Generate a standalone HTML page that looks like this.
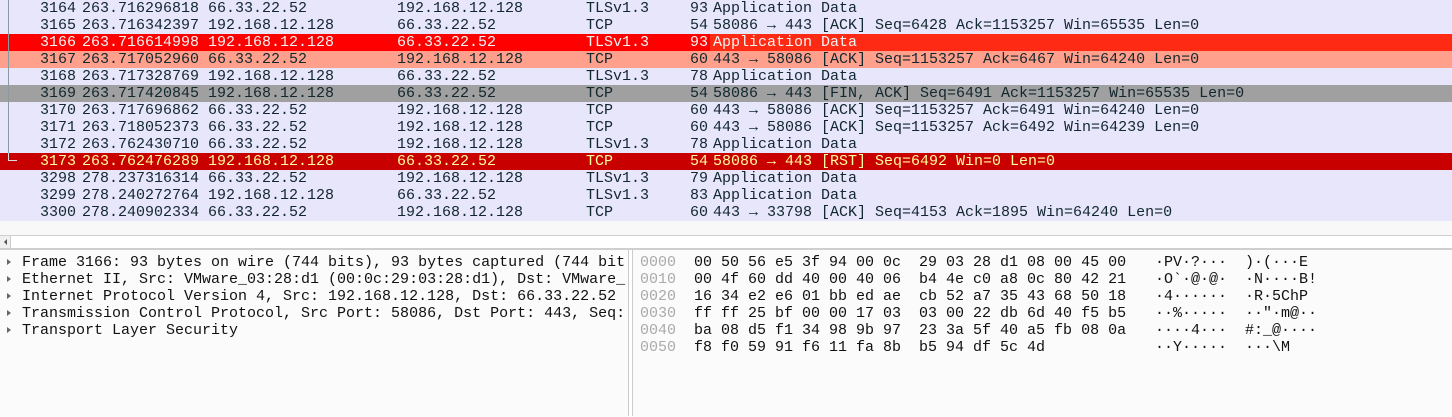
<!DOCTYPE html>
<html><head><meta charset="utf-8"><style>
body{margin:0;width:1452px;height:416px;background:#fff;overflow:hidden;font-family:"Liberation Mono",monospace;font-size:15px;position:relative}
.r{position:absolute;left:0;width:1452px;height:17px;line-height:17px;background:#e7e6fa;color:#12272e;white-space:pre}
.r span{position:absolute;top:0}
.n{left:0;width:76px;text-align:right}.t{left:82px}.s{left:208px}.d{left:397px}.p{left:586px}.l{left:660px;width:48px;text-align:right}.i{left:713px}
.tl{position:absolute;left:8px;top:0;width:1px;height:161px;background:#8a9aa0}
.pane{position:absolute;top:249px;height:167px;background:#fbfbfb}
.tr{position:absolute;left:22px;white-space:pre;color:#111;line-height:17px}
.ar{position:absolute;left:7px;width:0;height:0;border-left:4px solid #666;border-top:3.5px solid transparent;border-bottom:3.5px solid transparent}
.hx{position:absolute;white-space:pre;line-height:17px;color:#111}
</style></head><body>
<div class="r" style="top:0"><span class="n">3164</span><span class="t">263.716296818</span><span class="s">66.33.22.52</span><span class="d">192.168.12.128</span><span class="p">TLSv1.3</span><span class="l">93</span><span class="i">Application Data</span></div>
<div class="r" style="top:17px"><span class="n">3165</span><span class="t">263.716342397</span><span class="s">192.168.12.128</span><span class="d">66.33.22.52</span><span class="p">TCP</span><span class="l">54</span><span class="i">58086 → 443 [ACK] Seq=6428 Ack=1153257 Win=65535 Len=0</span></div>
<div class="r" style="top:34px;background:#ff0000;color:#f4f4f4"><span class="i" style="left:710px;width:742px;height:17px;background:#ff2a14"></span><span class="n">3166</span><span class="t">263.716614998</span><span class="s">192.168.12.128</span><span class="d">66.33.22.52</span><span class="p">TLSv1.3</span><span class="l">93</span><span class="i">Application Data</span></div>
<div class="r" style="top:51px;background:#ffa08c"><span class="n">3167</span><span class="t">263.717052960</span><span class="s">66.33.22.52</span><span class="d">192.168.12.128</span><span class="p">TCP</span><span class="l">60</span><span class="i">443 → 58086 [ACK] Seq=1153257 Ack=6467 Win=64240 Len=0</span></div>
<div class="r" style="top:68px"><span class="n">3168</span><span class="t">263.717328769</span><span class="s">192.168.12.128</span><span class="d">66.33.22.52</span><span class="p">TLSv1.3</span><span class="l">78</span><span class="i">Application Data</span></div>
<div class="r" style="top:85px;background:#a0a0a0"><span class="n">3169</span><span class="t">263.717420845</span><span class="s">192.168.12.128</span><span class="d">66.33.22.52</span><span class="p">TCP</span><span class="l">54</span><span class="i">58086 → 443 [FIN, ACK] Seq=6491 Ack=1153257 Win=65535 Len=0</span></div>
<div class="r" style="top:102px"><span class="n">3170</span><span class="t">263.717696862</span><span class="s">66.33.22.52</span><span class="d">192.168.12.128</span><span class="p">TCP</span><span class="l">60</span><span class="i">443 → 58086 [ACK] Seq=1153257 Ack=6491 Win=64240 Len=0</span></div>
<div class="r" style="top:119px"><span class="n">3171</span><span class="t">263.718052373</span><span class="s">66.33.22.52</span><span class="d">192.168.12.128</span><span class="p">TCP</span><span class="l">60</span><span class="i">443 → 58086 [ACK] Seq=1153257 Ack=6492 Win=64239 Len=0</span></div>
<div class="r" style="top:136px"><span class="n">3172</span><span class="t">263.762430710</span><span class="s">66.33.22.52</span><span class="d">192.168.12.128</span><span class="p">TLSv1.3</span><span class="l">78</span><span class="i">Application Data</span></div>
<div class="r" style="top:153px;background:#c80000;color:#fffc9c"><span class="n">3173</span><span class="t">263.762476289</span><span class="s">192.168.12.128</span><span class="d">66.33.22.52</span><span class="p">TCP</span><span class="l">54</span><span class="i">58086 → 443 [RST] Seq=6492 Win=0 Len=0</span></div>
<div class="r" style="top:170px"><span class="n">3298</span><span class="t">278.237316314</span><span class="s">66.33.22.52</span><span class="d">192.168.12.128</span><span class="p">TLSv1.3</span><span class="l">79</span><span class="i">Application Data</span></div>
<div class="r" style="top:187px"><span class="n">3299</span><span class="t">278.240272764</span><span class="s">192.168.12.128</span><span class="d">66.33.22.52</span><span class="p">TLSv1.3</span><span class="l">83</span><span class="i">Application Data</span></div>
<div class="r" style="top:204px"><span class="n">3300</span><span class="t">278.240902334</span><span class="s">66.33.22.52</span><span class="d">192.168.12.128</span><span class="p">TCP</span><span class="l">60</span><span class="i">443 → 33798 [ACK] Seq=4153 Ack=1895 Win=64240 Len=0</span></div>
<div class="tl"></div>
<div style="position:absolute;left:8px;top:160px;width:9px;height:1px;background:#ddd"></div>
<div style="position:absolute;left:8px;top:153px;width:1px;height:8px;background:#ddd"></div>
<div style="position:absolute;left:0;top:221px;width:1452px;height:15px;background:#f8f8f8"></div>
<div style="position:absolute;left:0;top:235px;width:1452px;height:1px;background:#d0d0d0"></div>
<div style="position:absolute;left:0;top:236px;width:10px;height:12px;background:#f0f0f0;border-right:1px solid #ccc"></div>
<div style="position:absolute;left:4px;top:239px;border-right:3px solid #555;border-top:3px solid transparent;border-bottom:3px solid transparent"></div>
<div style="position:absolute;left:0;top:248px;width:1452px;height:2px;background:#cfcfcf"></div>
<div class="pane" style="left:0;width:628px;top:250px">
<div class="ar" style="top:9px"></div><div class="tr" style="top:4px">Frame 3166: 93 bytes on wire (744 bits), 93 bytes captured (744 bit</div>
<div class="ar" style="top:26px"></div><div class="tr" style="top:21px">Ethernet II, Src: VMware_03:28:d1 (00:0c:29:03:28:d1), Dst: VMware_</div>
<div class="ar" style="top:43px"></div><div class="tr" style="top:38px">Internet Protocol Version 4, Src: 192.168.12.128, Dst: 66.33.22.52</div>
<div class="ar" style="top:60px"></div><div class="tr" style="top:55px">Transmission Control Protocol, Src Port: 58086, Dst Port: 443, Seq:</div>
<div class="ar" style="top:77px"></div><div class="tr" style="top:72px">Transport Layer Security</div>
</div>
<div style="position:absolute;left:628px;top:250px;width:1px;height:166px;background:#ccc"></div>
<div style="position:absolute;left:632px;top:250px;width:1px;height:166px;background:#ccc"></div>
<div class="pane" style="left:633px;width:819px;top:250px">
<div class="hx" style="left:7px;top:4px;color:#aaa">0000
0010
0020
0030
0040
0050</div>
<div class="hx" style="left:61px;top:4px">00 50 56 e5 3f 94 00 0c  29 03 28 d1 08 00 45 00
00 4f 60 dd 40 00 40 06  b4 4e c0 a8 0c 80 42 21
16 34 e2 e6 01 bb ed ae  cb 52 a7 35 43 68 50 18
ff ff 25 bf 00 00 17 03  03 00 22 db 6d 40 f5 b5
ba 08 d5 f1 34 98 9b 97  23 3a 5f 40 a5 fb 08 0a
f8 f0 59 91 f6 11 fa 8b  b5 94 df 5c 4d</div>
<div class="hx" style="left:522px;top:4px">·PV·?···  )·(···E
·O`·@·@·  ·N····B!
·4······  ·R·5ChP
··%·····  ··"·m@··
····4···  #:_@····
··Y·····  ···\M</div>
</div>
</body></html>
